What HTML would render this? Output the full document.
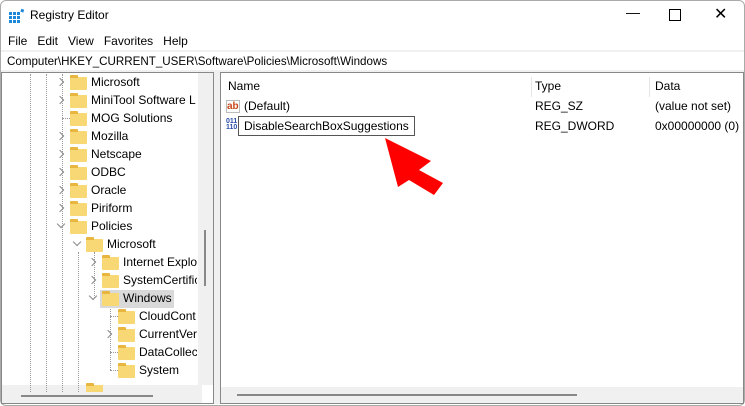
<!DOCTYPE html><html><head><style>
body{margin:0;width:745px;height:406px;overflow:hidden;background:#fff;font-family:"Liberation Sans",sans-serif;font-size:12px;color:#000;position:relative}
.a{position:absolute;white-space:nowrap}
.fold{position:absolute;width:17px;height:13px;background:#f8d775;border-radius:1px}
.fold:before{content:"";position:absolute;left:0;top:-2px;width:8px;height:3px;background:#e8b640;border-radius:1px 1px 0 0}
.chev{position:absolute;width:5px;height:5px;border-right:1px solid #888;border-bottom:1px solid #888;transform:rotate(-45deg)}
.chev.d{transform:rotate(45deg)}
.dot{position:absolute;border-left:1px dotted #999}
.hd{position:absolute;border-top:1px dotted #999;width:8px}
</style></head><body>
<div class="a" style="left:0;top:0;width:745px;height:406px;border:1px solid #aaa;border-radius:6px;box-sizing:border-box"></div>
<svg class="a" style="left:9px;top:8px" width="16" height="16"><g fill="#1e88d8"><rect x="0" y="4" width="3" height="3"/><rect x="4" y="4" width="3" height="3"/><rect x="8" y="4" width="3" height="3"/><rect x="0" y="8" width="3" height="3"/><rect x="4" y="8" width="3" height="3"/><rect x="8" y="8" width="3" height="3"/><rect x="0" y="12" width="3" height="3"/><rect x="4" y="12" width="3" height="3"/><rect x="8" y="12" width="3" height="3"/><rect x="12" y="1" width="3" height="3" transform="rotate(20 13 2)"/></g></svg>
<div class="a" style="left:30px;top:8px;font-size:12px">Registry Editor</div>
<div class="a" style="left:626px;top:4px;font-size:14px">—</div>
<div class="a" style="left:669px;top:9px;width:10px;height:10px;border:1px solid #000"></div>
<div class="a" style="left:714px;top:4px;font-size:16px">✕</div>
<div class="a" style="left:8px;top:34px;font-size:12px">File&nbsp;&nbsp;&nbsp;Edit&nbsp;&nbsp;&nbsp;View&nbsp;&nbsp;&nbsp;Favorites&nbsp;&nbsp;&nbsp;Help</div>
<div class="a" style="left:1px;top:50px;width:743px;height:22px;background:#f0f0f0"></div>
<div class="a" style="left:1px;top:52px;width:743px;height:18px;background:#fff"></div>
<div class="a" style="left:7px;top:55px;font-size:11.6px">Computer\HKEY_CURRENT_USER\Software\Policies\Microsoft\Windows</div>
<div class="a" style="left:1px;top:72px;width:213px;height:332px;border:1px solid #888;background:#fff;box-sizing:border-box;overflow:hidden">
<div class="a" style="left:0;top:312px;width:200px;height:18px;background:#f0f0f0"></div>
<div class="a" style="left:19px;top:322px;width:132px;height:2px;background:#888"></div>
<div class="a" style="left:196px;top:0;width:16px;height:312px;background:#f0f0f0"></div>
<div class="a" style="left:202px;top:157px;width:2px;height:56px;background:#888"></div>
</div>
<div class="a" style="left:214px;top:72px;width:6px;height:332px;background:#f0f0f0"></div>
<div class="dot" style="left:30px;top:74px;height:318px"></div>
<div class="dot" style="left:46px;top:74px;height:318px"></div>
<div class="dot" style="left:62px;top:74px;height:318px"></div>
<div class="dot" style="left:78px;top:252px;height:140px"></div>
<div class="dot" style="left:94px;top:252px;height:46px"></div>
<div class="dot" style="left:110px;top:306px;height:64px"></div>
<div style="position:absolute;left:0;top:0;width:197px;height:392px;overflow:hidden">
<div class="hd" style="left:62px;top:118px"></div>
<div class="hd" style="left:110px;top:316px"></div><div class="hd" style="left:110px;top:352px"></div><div class="hd" style="left:110px;top:370px"></div>
<span class="chev" style="left:57px;top:79px"></span><div class="fold" style="left:70px;top:77px"></div><div class="a" style="left:91px;top:75px">Microsoft</div>
<span class="chev" style="left:57px;top:97px"></span><div class="fold" style="left:70px;top:95px"></div><div class="a" style="left:91px;top:93px">MiniTool Software L</div>
<div class="fold" style="left:70px;top:113px"></div><div class="a" style="left:91px;top:111px">MOG Solutions</div>
<span class="chev" style="left:57px;top:133px"></span><div class="fold" style="left:70px;top:131px"></div><div class="a" style="left:91px;top:129px">Mozilla</div>
<span class="chev" style="left:57px;top:151px"></span><div class="fold" style="left:70px;top:149px"></div><div class="a" style="left:91px;top:147px">Netscape</div>
<span class="chev" style="left:57px;top:169px"></span><div class="fold" style="left:70px;top:167px"></div><div class="a" style="left:91px;top:165px">ODBC</div>
<span class="chev" style="left:57px;top:187px"></span><div class="fold" style="left:70px;top:185px"></div><div class="a" style="left:91px;top:183px">Oracle</div>
<span class="chev" style="left:57px;top:205px"></span><div class="fold" style="left:70px;top:203px"></div><div class="a" style="left:91px;top:201px">Piriform</div>
<span class="chev d" style="left:58px;top:221px"></span><div class="fold" style="left:70px;top:221px"></div><div class="a" style="left:91px;top:219px">Policies</div>
<span class="chev d" style="left:74px;top:239px"></span><div class="fold" style="left:86px;top:239px"></div><div class="a" style="left:107px;top:237px">Microsoft</div>
<span class="chev" style="left:89px;top:259px"></span><div class="fold" style="left:102px;top:257px"></div><div class="a" style="left:123px;top:255px">Internet Explo</div>
<span class="chev" style="left:89px;top:277px"></span><div class="fold" style="left:102px;top:275px"></div><div class="a" style="left:123px;top:273px">SystemCertific</div>
<div class="a" style="left:100px;top:290px;width:74px;height:18px;background:#d9d9d9"></div>
<span class="chev d" style="left:90px;top:293px"></span><div class="fold" style="left:102px;top:293px"></div><div class="a" style="left:123px;top:291px">Windows</div>
<div class="fold" style="left:118px;top:311px"></div><div class="a" style="left:139px;top:309px">CloudCont</div>
<span class="chev" style="left:105px;top:331px"></span><div class="fold" style="left:118px;top:329px"></div><div class="a" style="left:139px;top:327px">CurrentVer</div>
<div class="fold" style="left:118px;top:347px"></div><div class="a" style="left:139px;top:345px">DataCollec</div>
<div class="fold" style="left:118px;top:365px"></div><div class="a" style="left:139px;top:363px">System</div>
<div class="fold" style="left:86px;top:385px"></div>
</div>
<div class="a" style="left:220px;top:72px;width:524px;height:332px;border:1px solid #888;background:#fff;box-sizing:border-box">
<div class="a" style="left:0;top:314px;width:522px;height:16px;background:#f0f0f0"></div>
<div class="a" style="left:16px;top:321px;width:340px;height:2px;background:#888"></div>
<div class="a" style="left:310px;top:4px;height:20px;border-left:1px solid #e5e5e5"></div>
<div class="a" style="left:428px;top:4px;height:20px;border-left:1px solid #e5e5e5"></div>
</div>
<div class="a" style="left:228px;top:79px">Name</div>
<div class="a" style="left:535px;top:79px">Type</div>
<div class="a" style="left:655px;top:79px">Data</div>
<div class="a" style="left:226px;top:100px;width:14px;height:13px;border:1px solid #bbb;font-size:10px;font-weight:bold;color:#c8461a;line-height:11px;box-sizing:border-box">ab</div>
<div class="a" style="left:244px;top:99px">(Default)</div>
<div class="a" style="left:535px;top:99px">REG_SZ</div>
<div class="a" style="left:655px;top:99px">(value not set)</div>
<div class="a" style="left:226px;top:119px;font-size:7px;line-height:6px;font-weight:bold;color:#2a4ea8">011<br>110</div>
<div class="a" style="left:238px;top:116px;width:177px;height:20px;border:1px solid #555;background:#fff;box-sizing:border-box"></div>
<div class="a" style="left:244px;top:119px">DisableSearchBoxSuggestions</div>
<div class="a" style="left:535px;top:119px">REG_DWORD</div>
<div class="a" style="left:655px;top:119px">0x00000000 (0)</div>
<svg class="a" style="left:0;top:0" width="745" height="406"><polygon fill="#ff0000" points="385,138 431,161 419,170 443,183 434,195 409,180 398,187"/></svg>
</body></html>
